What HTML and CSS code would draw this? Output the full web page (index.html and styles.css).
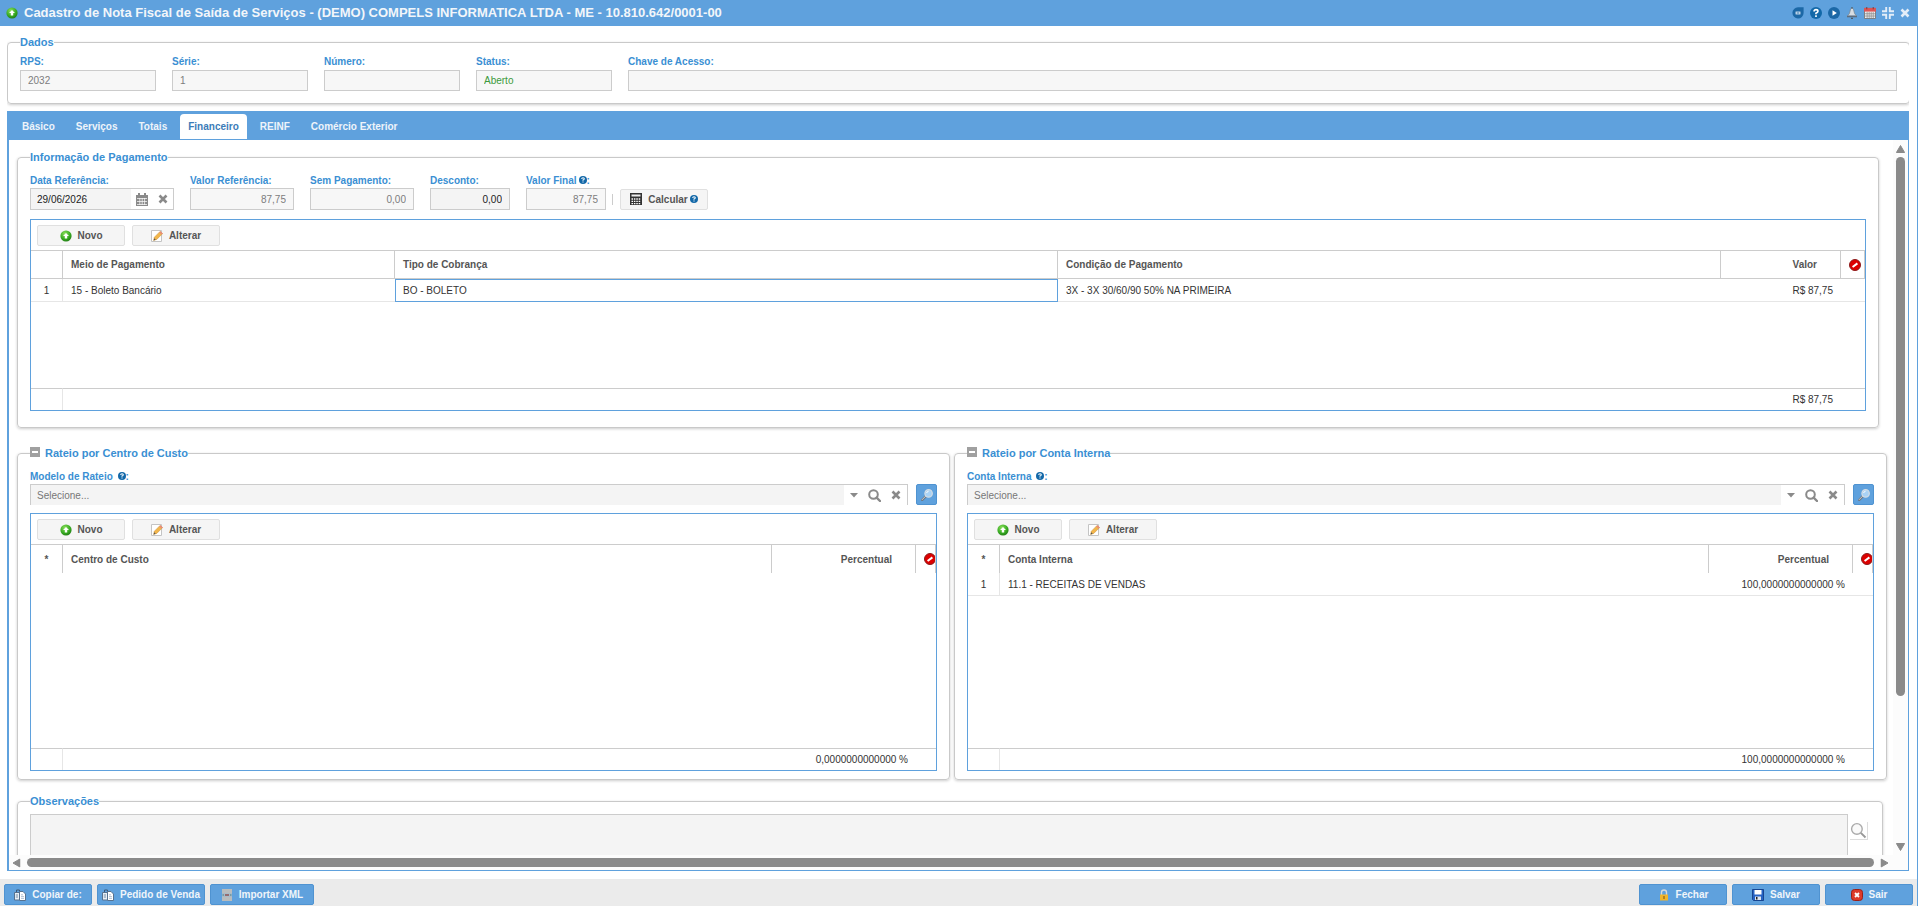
FILE: index.html
```html
<!DOCTYPE html>
<html lang="pt-BR">
<head>
    <meta charset="UTF-8">
    <meta name="viewport" content="width=device-width, initial-scale=1.0">
    <title>Cadastro de Nota Fiscal de Saída de Serviços</title>
    <link rel="stylesheet" href="styles.css">
</head>
<body>
    <!-- Icons -->
    <svg class="sprite" aria-hidden="true">
        <defs>
            <radialGradient id="gGreen" cx="0.4" cy="0.3" r="0.8">
                <stop offset="0" stop-color="#8be05c"/>
                <stop offset="0.6" stop-color="#35a820"/>
                <stop offset="1" stop-color="#1c6e12"/>
            </radialGradient>
        </defs>
        <symbol id="i-new" viewBox="0 0 12 12">
            <circle cx="6" cy="6" r="5.6" fill="url(#gGreen)"/>
            <path d="M6 3L9 6H7.2V8.6H4.8V6H3Z" fill="#fff"/>
        </symbol>
        <symbol id="i-edit" viewBox="0 0 12 12">
            <path d="M0.5 0.5H10.5V11.5H0.5Z" fill="#fff" stroke="#c4c4c4"/>
            <path d="M2.6 10.4L3.4 7.2L9.1 1.4L11.6 3.6L5.8 9.4Z" fill="#f2b64a" stroke="#c98c35" stroke-width="0.5"/>
            <path d="M8.2 2.4L9.4 1.2L11.8 3.4L10.6 4.6Z" fill="#e88a7a"/>
            <path d="M2.6 10.4L3.2 8.2L4.7 9.7Z" fill="#555"/>
        </symbol>
        <symbol id="i-del" viewBox="0 0 12 12">
            <circle cx="6" cy="6" r="5.5" fill="#dd0000" stroke="#8c1a1a"/>
            <path d="M3.6 8L8.4 4.4" stroke="#fff" stroke-width="2"/>
        </symbol>
        <symbol id="i-help" viewBox="0 0 8 8">
            <circle cx="4" cy="4" r="4" fill="#1268a8"/>
            <path d="M2.7 3Q2.8 1.7 4 1.7Q5.3 1.7 5.3 2.8Q5.3 3.6 4 4.1V4.8M4 5.5V6.6" fill="none" stroke="#fff" stroke-width="1.1"/>
        </symbol>
        <symbol id="i-x" viewBox="0 0 10 10">
            <path d="M1.5 1.5L8.5 8.5M8.5 1.5L1.5 8.5" stroke="currentColor" stroke-width="2.6"/>
        </symbol>
        <symbol id="i-cal" viewBox="0 0 12 13">
            <path d="M0 2H12V13H0Z" fill="#8a8a8a"/>
            <path d="M3 0V3M9 0V3" stroke="#8a8a8a" stroke-width="2"/>
            <path d="M1 5.5H11M1 8.5H11M1 11.5H11M3.8 5V12M6.2 5V12M8.6 5V12" stroke="#fff" stroke-width="0.7"/>
        </symbol>
        <symbol id="i-search" viewBox="0 0 13 13">
            <circle cx="5.5" cy="5.5" r="4.3" fill="none" stroke="currentColor" stroke-width="2"/>
            <path d="M8.6 8.6L12 12" stroke="currentColor" stroke-width="2.4" stroke-linecap="round"/>
        </symbol>
        <symbol id="i-down" viewBox="0 0 8 5">
            <path d="M0 0H8L4 4.6Z" fill="#8a8a8a"/>
        </symbol>
        <symbol id="i-lens" viewBox="0 0 12 12">
            <path d="M5.4 6.6L1.2 11" stroke="#6f7a86" stroke-width="2.4" stroke-linecap="round"/>
            <path d="M5.2 6.6L1.2 10.6" stroke="#c7ccd1" stroke-width="1" stroke-linecap="round"/>
            <circle cx="7.6" cy="4.4" r="3.7" fill="#a9d2f5" stroke="#d5dde4" stroke-width="1.2"/>
            <path d="M5.6 4Q6 2.4 7.6 2.2" fill="none" stroke="#fff"/>
        </symbol>
        <symbol id="i-calc" viewBox="0 0 12 12">
            <path d="M0 0H12V12H0Z" fill="#333"/>
            <path d="M1.5 1.5H10.5V3.5H1.5Z" fill="#eee"/>
            <path d="M1.5 6H10.5M1.5 8.3H10.5M1.5 10.6H10.5" stroke="#fff" stroke-width="1.3" stroke-dasharray="1.5 0.9"/>
        </symbol>
        <symbol id="i-copy" viewBox="0 0 12 12">
            <path d="M0.5 3.5H5.5V11H0.5Z" fill="#e8eff6" stroke="#56718f"/>
            <path d="M2.5 3V1H5.5V3" fill="none" stroke="#3d5878"/>
            <path d="M5.5 2.5H9L11.5 5V11.5H5.5Z" fill="#fff" stroke="#56718f"/>
            <path d="M7 5.8H9M7 7.6H10M7 9.4H10" stroke="#9fb3c9" stroke-width="0.8"/>
            <path d="M1.8 6H4M1.8 8H4" stroke="#56718f" stroke-width="0.8"/>
        </symbol>
        <symbol id="i-xml" viewBox="0 0 12 12">
            <path d="M1 0H11V12H1Z" fill="#b9bcbd"/>
            <path d="M1 4H11V8H1Z" fill="#a9bac6"/>
            <path d="M1.5 6H3M9 6H10.5" stroke="#3e7f86" stroke-width="1.2"/>
            <path d="M4 6H8" stroke="#8d4a4a" stroke-width="1.4"/>
        </symbol>
        <symbol id="i-lock" viewBox="0 0 12 12">
            <path d="M3.5 6V3.2Q3.5 1 6 1Q8.5 1 8.5 3.2V6" fill="none" stroke="#d5d9dc" stroke-width="1.4"/>
            <path d="M2 5.5H10V11.5H2Z" fill="#f0b52a"/>
            <path d="M6 7V10" stroke="#93661a" stroke-width="1.3"/>
        </symbol>
        <symbol id="i-save" viewBox="0 0 12 12">
            <path d="M0.5 0.5H11.5V11.5H1.5L0.5 10.5Z" fill="#2663c4" stroke="#174590"/>
            <path d="M2.5 1H9.5V5.5H2.5Z" fill="#fff"/>
            <path d="M3 7.5H9V11H3Z" fill="#dce4ef"/>
            <path d="M4 8H5.5V10.5H4Z" fill="#222"/>
        </symbol>
        <symbol id="i-exit" viewBox="0 0 12 12">
            <rect x="0.5" y="0.5" width="11" height="11" rx="3" fill="#dc3a2a" stroke="#9c1f15"/>
            <path d="M4 4L8 8M8 4L4 8" stroke="#fff" stroke-width="1.8"/>
        </symbol>
        <symbol id="i-back" viewBox="0 0 12 12">
            <path d="M6 0.3H11.6V6A5.6 5.6 0 1 1 6 0.3Z" fill="#1c68a6"/>
            <path d="M3.6 4.6H8.4V7.4H3.6Z" fill="#e6eef6"/>
            <path d="M4.6 6H7.4" stroke="#1c68a6"/>
        </symbol>
        <symbol id="i-play" viewBox="0 0 12 12">
            <circle cx="6" cy="6" r="6" fill="#1c68a6"/>
            <path d="M4.5 3.2L8.8 6L4.5 8.8Z" fill="#fff"/>
        </symbol>
        <symbol id="i-bell" viewBox="0 0 12 12">
            <path d="M6 1Q8 1.5 8 4.5Q8.2 7 10.5 8.8H1.5Q3.8 7 4 4.5Q4 1.5 6 1Z" fill="#d8dde2" stroke="#77828d" stroke-width="0.7"/>
            <path d="M1 9.6H11" stroke="#5e6c7c" stroke-width="1.4"/>
            <path d="M6 0V1.5M5 11.3H7" stroke="#4a4a4a"/>
        </symbol>
        <symbol id="i-agenda" viewBox="0 0 13 13">
            <path d="M0.5 1.5H12.5V12.5H0.5Z" fill="#f1f1f1" stroke="#777"/>
            <path d="M0 1H13V5H0Z" fill="#dd5555"/>
            <path d="M3 0V2.5M10 0V2.5" stroke="#7a3a3a"/>
            <path d="M1 7.3H12M1 9.8H12M3.4 5.5V12M5.6 5.5V12M7.8 5.5V12M10 5.5V12" stroke="#888" stroke-width="0.8"/>
        </symbol>
        <symbol id="i-shrink" viewBox="0 0 12 12">
            <path d="M4.2 0V4.2H0M7.8 0V4.2H12M4.2 12V7.8H0M7.8 12V7.8H12" fill="none" stroke="#e3edf8" stroke-width="1.9"/>
        </symbol>
        <symbol id="i-minus" viewBox="0 0 10 10">
            <path d="M0 0H10V10H0Z" fill="#a0a0a0"/>
            <path d="M2 5H8" stroke="#fff" stroke-width="2"/>
        </symbol>
        <symbol id="i-zoom" viewBox="0 0 16 16">
            <circle cx="6.5" cy="6.5" r="5" fill="#fafafa" stroke="#aaa" stroke-width="1.3"/>
            <path d="M10.2 10.2L14.6 14.6" stroke="#999" stroke-width="1.8"/>
        </symbol>
        <symbol id="i-up" viewBox="0 0 9 8"><path d="M4.5 0.5L8.6 7.5H0.4Z" fill="#8a8a8a" stroke="#8a8a8a" stroke-linejoin="round"/></symbol>
    </svg>

    <div class="window">
        <header class="titlebar">
            <svg class="icon"><use href="#i-new"/></svg>
            <h1>Cadastro de Nota Fiscal de Saída de Serviços - (DEMO) COMPELS INFORMATICA LTDA - ME - 10.810.642/0001-00</h1>
            <div class="tools">
                <button type="button" aria-label="Anterior"><svg class="icon"><use href="#i-back"/></svg></button>
                <button type="button" aria-label="Ajuda"><svg class="icon"><use href="#i-help"/></svg></button>
                <button type="button" aria-label="Próximo"><svg class="icon"><use href="#i-play"/></svg></button>
                <button type="button" aria-label="Avisos"><svg class="icon"><use href="#i-bell"/></svg></button>
                <button type="button" aria-label="Agenda"><svg class="icon"><use href="#i-agenda"/></svg></button>
                <button type="button" aria-label="Restaurar"><svg class="icon"><use href="#i-shrink"/></svg></button>
                <button type="button" aria-label="Fechar janela"><svg class="icon small"><use href="#i-x"/></svg></button>
            </div>
        </header>

        <main class="content">
            <fieldset class="box dados">
                <legend>Dados</legend>
                <div class="fields">
                    <div class="field w136">
                        <label for="rps">RPS:</label>
                        <input type="text" id="rps" class="readonly" value="2032" readonly>
                    </div>
                    <div class="field w136">
                        <label for="serie">Série:</label>
                        <input type="text" id="serie" class="readonly" value="1" readonly>
                    </div>
                    <div class="field w136">
                        <label for="numero">Número:</label>
                        <input type="text" id="numero" class="readonly" readonly>
                    </div>
                    <div class="field w136">
                        <label for="status">Status:</label>
                        <input type="text" id="status" class="readonly aberto" value="Aberto" readonly>
                    </div>
                    <div class="field grow">
                        <label for="chave">Chave de Acesso:</label>
                        <input type="text" id="chave" class="readonly" readonly>
                    </div>
                </div>
            </fieldset>

            <nav class="tabs">
                <a href="#basico">Básico</a>
                <a href="#servicos">Serviços</a>
                <a href="#totais">Totais</a>
                <a href="#financeiro" class="active">Financeiro</a>
                <a href="#reinf">REINF</a>
                <a href="#comercio">Comércio Exterior</a>
            </nav>

            <div class="panel">
                <div class="view">
                    <!-- Pagamento -->
                    <fieldset class="box pagamento">
                        <legend>Informação de Pagamento</legend>
                        <div class="fields">
                            <div class="field w144">
                                <label for="data">Data Referência:</label>
                                <div class="date">
                                    <input type="text" id="data" value="29/06/2026">
                                    <button type="button" aria-label="Calendário"><svg class="icon cal"><use href="#i-cal"/></svg></button>
                                    <button type="button" aria-label="Limpar data"><svg class="icon small"><use href="#i-x"/></svg></button>
                                </div>
                            </div>
                            <div class="field w104">
                                <label for="valorRef">Valor Referência:</label>
                                <input type="text" id="valorRef" class="readonly num" value="87,75" readonly>
                            </div>
                            <div class="field w104">
                                <label for="semPag">Sem Pagamento:</label>
                                <input type="text" id="semPag" class="readonly num" value="0,00" readonly>
                            </div>
                            <div class="field w80">
                                <label for="desconto">Desconto:</label>
                                <input type="text" id="desconto" class="num" value="0,00">
                            </div>
                            <div class="field w80">
                                <label for="valorFinal">Valor Final<svg class="help"><use href="#i-help"/></svg>:</label>
                                <input type="text" id="valorFinal" class="readonly num" value="87,75" readonly>
                            </div>
                            <div class="calc">
                                <button type="button" class="btn"><svg class="icon"><use href="#i-calc"/></svg><span>Calcular<svg class="help"><use href="#i-help"/></svg></span></button>
                            </div>
                        </div>

                        <div class="grid">
                            <div class="toolbar">
                                <button type="button" class="btn"><svg class="icon"><use href="#i-new"/></svg>Novo</button>
                                <button type="button" class="btn"><svg class="icon"><use href="#i-edit"/></svg>Alterar</button>
                            </div>
                            <table class="lined">
                                <colgroup>
                                    <col class="c-idx">
                                    <col class="c-meio">
                                    <col>
                                    <col>
                                    <col class="c-valor">
                                    <col class="c-del">
                                </colgroup>
                                <thead>
                                    <tr>
                                        <th class="idx"></th>
                                        <th>Meio de Pagamento</th>
                                        <th>Tipo de Cobrança</th>
                                        <th>Condição de Pagamento</th>
                                        <th class="num">Valor</th>
                                        <th class="del"><svg class="icon"><use href="#i-del"/></svg></th>
                                    </tr>
                                </thead>
                                <tbody>
                                    <tr>
                                        <td class="idx">1</td>
                                        <td>15 - Boleto Bancário</td>
                                        <td class="selected">BO - BOLETO</td>
                                        <td>3X - 3X 30/60/90 50% NA PRIMEIRA</td>
                                        <td class="num">R$ 87,75</td>
                                        <td></td>
                                    </tr>
                                    <tr class="filler"><td colspan="6"></td></tr>
                                </tbody>
                                <tfoot>
                                    <tr>
                                        <td class="idx"></td>
                                        <td colspan="3"></td>
                                        <td class="num">R$ 87,75</td>
                                        <td></td>
                                    </tr>
                                </tfoot>
                            </table>
                        </div>
                    </fieldset>

                    <!-- Rateios -->
                    <div class="rateios">
                        <fieldset class="box rateio">
                            <legend><svg class="toggle"><use href="#i-minus"/></svg>Rateio por Centro de Custo</legend>
                            <label for="modelo">Modelo de Rateio <svg class="help"><use href="#i-help"/></svg>:</label>
                            <div class="combo-line">
                                <div class="combo">
                                    <select id="modelo"><option>Selecione...</option></select>
                                    <svg class="arrow"><use href="#i-down"/></svg>
                                    <button type="button" aria-label="Pesquisar"><svg class="icon search"><use href="#i-search"/></svg></button>
                                    <button type="button" aria-label="Limpar"><svg class="icon small"><use href="#i-x"/></svg></button>
                                </div>
                                <button type="button" class="lens" aria-label="Consultar"><svg class="icon"><use href="#i-lens"/></svg></button>
                            </div>
                            <div class="grid">
                                <div class="toolbar">
                                    <button type="button" class="btn"><svg class="icon"><use href="#i-new"/></svg>Novo</button>
                                    <button type="button" class="btn"><svg class="icon"><use href="#i-edit"/></svg>Alterar</button>
                                </div>
                                <table class="tall">
                                    <colgroup>
                                        <col class="c-idx">
                                        <col>
                                        <col class="c-perc">
                                        <col class="c-clip">
                                    </colgroup>
                                    <thead>
                                        <tr>
                                            <th class="idx">*</th>
                                            <th>Centro de Custo</th>
                                            <th class="num">Percentual</th>
                                            <th class="del"><svg class="icon"><use href="#i-del"/></svg></th>
                                        </tr>
                                    </thead>
                                    <tbody>
                                        <tr class="filler"><td colspan="4"></td></tr>
                                    </tbody>
                                    <tfoot>
                                        <tr>
                                            <td class="idx"></td>
                                            <td></td>
                                            <td class="num">0,0000000000000 %</td>
                                            <td></td>
                                        </tr>
                                    </tfoot>
                                </table>
                            </div>
                        </fieldset>

                        <fieldset class="box rateio">
                            <legend><svg class="toggle"><use href="#i-minus"/></svg>Rateio por Conta Interna</legend>
                            <label for="conta">Conta Interna <svg class="help"><use href="#i-help"/></svg>:</label>
                            <div class="combo-line">
                                <div class="combo">
                                    <select id="conta"><option>Selecione...</option></select>
                                    <svg class="arrow"><use href="#i-down"/></svg>
                                    <button type="button" aria-label="Pesquisar"><svg class="icon search"><use href="#i-search"/></svg></button>
                                    <button type="button" aria-label="Limpar"><svg class="icon small"><use href="#i-x"/></svg></button>
                                </div>
                                <button type="button" class="lens" aria-label="Consultar"><svg class="icon"><use href="#i-lens"/></svg></button>
                            </div>
                            <div class="grid">
                                <div class="toolbar">
                                    <button type="button" class="btn"><svg class="icon"><use href="#i-new"/></svg>Novo</button>
                                    <button type="button" class="btn"><svg class="icon"><use href="#i-edit"/></svg>Alterar</button>
                                </div>
                                <table class="tall">
                                    <colgroup>
                                        <col class="c-idx">
                                        <col>
                                        <col class="c-perc">
                                        <col class="c-clip">
                                    </colgroup>
                                    <thead>
                                        <tr>
                                            <th class="idx">*</th>
                                            <th>Conta Interna</th>
                                            <th class="num">Percentual</th>
                                            <th class="del"><svg class="icon"><use href="#i-del"/></svg></th>
                                        </tr>
                                    </thead>
                                    <tbody>
                                        <tr>
                                            <td class="idx">1</td>
                                            <td>11.1 - RECEITAS DE VENDAS</td>
                                            <td class="num">100,0000000000000 %</td>
                                            <td></td>
                                        </tr>
                                        <tr class="filler"><td colspan="4"></td></tr>
                                    </tbody>
                                    <tfoot>
                                        <tr>
                                            <td class="idx"></td>
                                            <td></td>
                                            <td class="num">100,0000000000000 %</td>
                                            <td></td>
                                        </tr>
                                    </tfoot>
                                </table>
                            </div>
                        </fieldset>
                    </div>

                    <!-- Observações -->
                    <fieldset class="box obs">
                        <legend>Observações</legend>
                        <div class="obs-line">
                            <textarea aria-label="Observações"></textarea>
                            <button type="button" class="zoom" aria-label="Ampliar"><svg class="icon"><use href="#i-zoom"/></svg></button>
                        </div>
                    </fieldset>
                </div>

                <div class="vbar" aria-hidden="true">
                    <svg class="tri"><use href="#i-up"/></svg>
                    <div class="track"><div class="thumb"></div></div>
                    <svg class="tri flip"><use href="#i-up"/></svg>
                </div>
                <div class="hbar" aria-hidden="true">
                    <svg class="tri left"><use href="#i-up"/></svg>
                    <div class="thumb"></div>
                    <svg class="tri right"><use href="#i-up"/></svg>
                </div>
            </div>
        </main>

        <footer class="actions">
            <button type="button" class="btn blue"><svg class="icon"><use href="#i-copy"/></svg>Copiar de:</button>
            <button type="button" class="btn blue w108"><svg class="icon"><use href="#i-copy"/></svg>Pedido de Venda</button>
            <button type="button" class="btn blue w104"><svg class="icon"><use href="#i-xml"/></svg>Importar XML</button>
            <span class="spacer"></span>
            <button type="button" class="btn blue"><svg class="icon"><use href="#i-lock"/></svg>Fechar</button>
            <button type="button" class="btn blue"><svg class="icon"><use href="#i-save"/></svg>Salvar</button>
            <button type="button" class="btn blue"><svg class="icon"><use href="#i-exit"/></svg>Sair</button>
        </footer>
    </div>
</body>
</html>
```
FILE: styles.css
```css
* {
    box-sizing: border-box;
}

body {
    margin: 0;
    background-color: #fff;
    font-family: Arial, "Liberation Sans", sans-serif;
    font-size: 10px;
    color: #333;
}

button, input, select, textarea {
    font-family: inherit;
    font-size: inherit;
    margin: 0;
}

button {
    padding: 0;
    border: none;
    background: none;
    color: inherit;
    cursor: pointer;
}

.sprite {
    position: absolute;
    width: 0;
    height: 0;
}

.icon {
    display: block;
    width: 12px;
    height: 12px;
    flex: none;
}

.icon.small {
    width: 10px;
    height: 10px;
}

.icon.cal {
    height: 13px;
}

.icon.search {
    width: 13px;
    height: 13px;
}

.help {
    width: 8px;
    height: 8px;
    margin-left: 2px;
}

.window {
    display: flex;
    flex-direction: column;
    height: 100vh;
    border-right: 1px solid #5fa1dd;
}

/* Title bar */
.titlebar {
    display: flex;
    align-items: center;
    height: 26px;
    padding: 0 7px 0 6px;
    background-color: #5fa1dd;
}

.titlebar h1 {
    flex: 1;
    margin: 0 0 0 6px;
    font-size: 13px;
    line-height: 26px;
    color: #f2f6fa;
    white-space: nowrap;
}

.tools {
    display: flex;
    align-items: center;
    gap: 6px;
    color: #e3edf8;
}

.content {
    display: flex;
    flex-direction: column;
    flex: 1;
    min-height: 0;
    margin: 0 8px 8px 7px;
    overflow-x: clip;
}

/* Fieldsets */
.box {
    min-width: 0;
    margin: 0;
    border: 1px solid #c9c9c9;
    border-radius: 4px;
    padding: 9px 12px 8px;
    box-shadow: 0 1px 3px rgba(0, 0, 0, 0.2);
}

.box legend {
    padding: 0;
    background-color: #fff;
    font-size: 11px;
    font-weight: bold;
    line-height: 15px;
    color: #3a8fd3;
}

label {
    display: block;
    font-weight: bold;
    line-height: 14px;
    color: #3a8fd3;
    white-space: nowrap;
}

.box.dados {
    margin: 9px -1px 7px 0;
    padding: 5px 12px 12px;
}

.dados label {
    margin-bottom: 1px;
}

.fields {
    display: flex;
    gap: 16px;
}

.w80 { width: 80px; }
.w104 { width: 104px; }
.w108 { width: 108px; }
.w136 { width: 136px; }
.w144 { width: 144px; }
.grow { flex: 1; }

.field input {
    display: block;
    width: 100%;
    height: 21px;
    padding: 0 7px;
    border: 1px solid #ccc;
    border-radius: 0;
    background-color: #f4f4f4;
    color: #222;
}

.pagamento .field > input {
    height: 22px;
}

.field input.readonly {
    background-color: #f7f7f7;
    color: #7d7d7d;
}

.field input.aberto {
    color: #3c9a3c;
}

.field input.num {
    text-align: right;
}

/* Tabs */
.tabs {
    display: flex;
    gap: 5px;
    height: 29px;
    padding: 3px 7px 1px;
    background-color: #5fa1dd;
}

.tabs a {
    padding: 0 8px;
    border-radius: 4px 4px 0 0;
    font-weight: bold;
    line-height: 25px;
    color: #eef4fa;
    text-decoration: none;
}

.tabs a.active {
    background-color: #fff;
    color: #3b7cb8;
}

.panel {
    display: grid;
    grid-template: minmax(0, 1fr) 15px / minmax(0, 1fr) 15px;
    flex: 1;
    min-height: 0;
    border: 1px solid #5fa1dd;
    border-width: 0 1px 1px 2px;
    background-color: #fcfcfc;
}

.view {
    overflow: hidden;
    padding: 10px 0 0 8px;
    background-color: #fff;
}

/* Scrollbars */
.vbar {
    display: flex;
    flex-direction: column;
    align-items: center;
    padding: 5px 0 4px;
    gap: 4px;
}

.vbar .track {
    flex: 1;
}

.thumb {
    border-radius: 5px;
    background-color: #8a8a8a;
}

.vbar .thumb {
    width: 9px;
    height: 79%;
}

.hbar {
    display: flex;
    align-items: center;
    gap: 6px;
    padding: 0 4px 0 3px;
}

.hbar .thumb {
    flex: 1;
    height: 9px;
}

.tri {
    width: 9px;
    height: 8px;
}

.flip { transform: rotate(180deg); }
.left { transform: rotate(-90deg); }
.right { transform: rotate(90deg); }

/* Pagamento */
.box.pagamento {
    margin-right: 14px;
    padding-bottom: 16px;
}

.date {
    display: flex;
    align-items: center;
    gap: 10px;
    height: 22px;
    padding-right: 5px;
    border: 1px solid #ccc;
    color: #8a8a8a;
}

.date input {
    flex: 1;
    min-width: 0;
    height: 20px;
    margin-right: -5px;
    padding: 0 6px;
    border: none;
}

.calc {
    display: flex;
    align-items: center;
    gap: 7px;
    height: 22px;
    align-self: flex-end;
    margin-left: -10px;
}

.calc::before {
    content: "";
    height: 11px;
    border-left: 1px solid #ccc;
}

.btn {
    display: flex;
    align-items: center;
    justify-content: center;
    gap: 6px;
    min-width: 88px;
    height: 21px;
    border: 1px solid #e0e0e0;
    border-radius: 2px;
    background-color: #f5f5f5;
    font-weight: bold;
    color: #555;
    white-space: nowrap;
}

/* Grids */
.grid {
    margin-top: 9px;
    border: 1px solid #5fa1dd;
    background-color: #fff;
}

.toolbar {
    display: flex;
    gap: 7px;
    height: 30px;
    padding: 5px 6px 0;
}

.grid table {
    table-layout: fixed;
    width: 100%;
    height: 160px;
    border-collapse: separate;
    border-spacing: 0;
}

.grid table.tall {
    height: 226px;
}

.c-idx { width: 32px; }
.c-meio { width: 332px; }
.c-valor { width: 120px; }
.c-perc { width: 144px; }
.c-del { width: 24px; }
.c-clip { width: 20px; }

.grid th, .grid td {
    height: 23px;
    padding: 0 8px;
    overflow: hidden;
    text-align: left;
    white-space: nowrap;
}

.grid th {
    height: 29px;
    border-top: 1px solid #ccc;
    border-right: 1px solid #ccc;
    color: #555;
}

.lined th {
    border-bottom: 1px solid #ccc;
}

.grid td {
    border-bottom: 1px solid #e6e6e6;
}

.grid td.selected {
    padding: 0 7px;
    border: 1px solid #5fa1dd;
}

.grid .idx {
    padding: 0;
    text-align: center;
}

.grid td.idx {
    border-right: 1px solid #e6e6e6;
}

.grid th.num {
    padding-right: 23px;
    text-align: right;
}

.grid td.num {
    text-align: right;
}

.grid th.del {
    padding: 0 0 0 8px;
}

.grid .filler td {
    height: auto;
    border: none;
}

.grid tfoot td {
    height: 22px;
    border-top: 1px solid #ccc;
    border-bottom: none;
}

/* Rateios */
.rateios {
    display: grid;
    grid-template-columns: 1fr 1fr;
    gap: 4px;
    margin: 18px 6px 14px 0;
}

.rateio .grid {
    margin-top: 8px;
}

.toggle {
    width: 10px;
    height: 10px;
    margin-right: 5px;
}

.combo-line {
    display: flex;
    gap: 8px;
}

.combo {
    display: flex;
    flex: 1;
    align-items: center;
    gap: 10px;
    height: 21px;
    padding-right: 6px;
    border: 1px solid #ccc;
    border-bottom: none;
    color: #8a8a8a;
}

.combo select {
    flex: 1;
    align-self: stretch;
    margin-right: -4px;
    padding: 0 6px;
    border: none;
    border-radius: 0;
    appearance: none;
    background-color: #f4f4f4;
    color: #777;
}

.arrow {
    width: 8px;
    height: 5px;
}

.lens {
    display: flex;
    align-items: center;
    justify-content: center;
    width: 21px;
    height: 21px;
    border: 1px solid #4f93d1;
    border-radius: 2px;
    background-color: #5fa1dd;
}

/* Observações */
.box.obs {
    margin-right: 10px;
    padding-top: 5px;
}

.obs-line {
    display: flex;
    align-items: flex-start;
    gap: 2px;
}

.obs textarea {
    flex: 1;
    height: 80px;
    border: 1px solid #ccc;
    background-color: #f4f4f4;
    resize: none;
}

.zoom {
    margin: 8px 2px 0 0;
    border: 1px solid #ddd;
    border-width: 0 1px 1px 0;
}

.zoom .icon {
    width: 17px;
    height: 17px;
}

/* Bottom bar */
.actions {
    display: flex;
    gap: 5px;
    height: 27px;
    padding: 5px 4px 1px;
    background-color: #ebebeb;
}

.spacer {
    flex: 1;
}

.btn.blue {
    border-color: #4f93d1;
    background-color: #5fa1dd;
    color: #f0f5fa;
}
```
